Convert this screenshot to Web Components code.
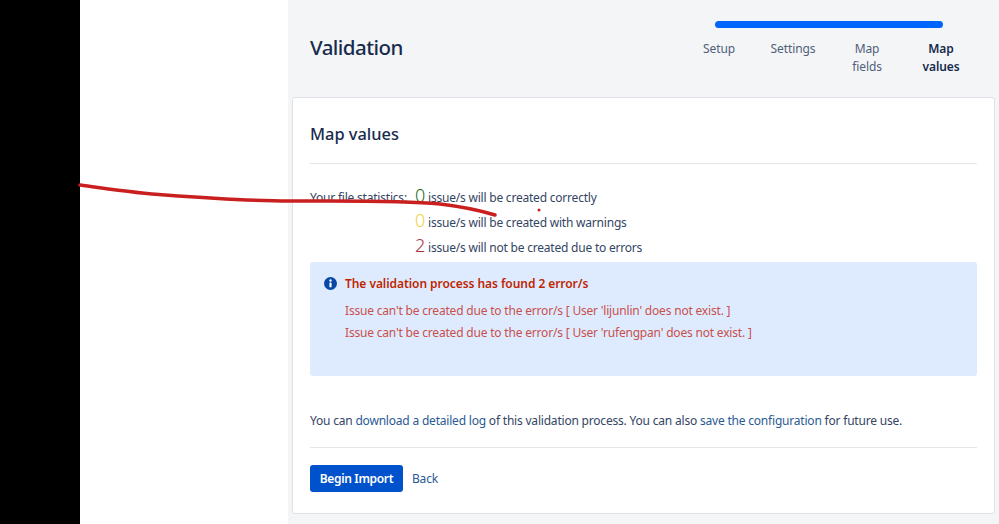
<!DOCTYPE html>
<html>
<head>
<meta charset="utf-8">
<title>Validation</title>
<style>
  html, body { margin: 0; height: 524px; overflow: hidden; background: #fff; }
  body { font-family: "Noto Sans", "Open Sans", sans-serif; color: #172b4d; }
</style>
</head>
<body>
<import-page>
  <wizard-steps slot="steps">
    <step-label>Setup</step-label>
    <step-label>Settings</step-label>
    <step-label>Map<br>fields</step-label>
    <step-label current>Map<br>values</step-label>
  </wizard-steps>
  <file-stats slot="stats"></file-stats>
  <info-panel slot="panel" heading="The validation process has found 2 error/s">
    <div>Issue can't be created due to the error/s [ User 'lijunlin' does not exist. ]</div>
    <div>Issue can't be created due to the error/s [ User 'rufengpan' does not exist. ]</div>
  </info-panel>
</import-page>

<script>
class ImportPage extends HTMLElement {
    constructor(){
        super();
        this.attachShadow({mode: 'open'}).innerHTML = `
        <style>
            :host{ display: flex; width: 999px; height: 524px; position: relative; }
            .black{ flex: 0 0 80px; background: #000; }
            .blank{ flex: 0 0 208px; background: #fff; }
            .main{ flex: 1 1 auto; background: #f4f5f7; padding: 0 4px; display: flex; flex-direction: column; }
            .top{ height: 97px; display: flex; justify-content: space-between; box-sizing: border-box; padding-left: 18px; }
            h1{ margin: 33px 0 0; font-size: 20.5px; letter-spacing: -0.55px; line-height: 28px; font-weight: 500; color: #172b4d; }
            .card{ height: 417px; box-sizing: border-box; background: #fff; border: 1px solid #dfe1e6; border-radius: 3px; padding: 24px 17px 0; }
            h2{ margin: 0; font-size: 16.4px; line-height: 24px; font-weight: 500; color: #172b4d; }
            hr{ border: none; border-top: 1px solid #e4e6ea; margin: 0; }
            .head{ padding-bottom: 17px; }
            p{ margin: 0; font-size: 12px; letter-spacing: -0.2px; line-height: 18px; color: #344563; }
            a{ color: #2a5a94; text-decoration: none; }
            .log{ margin-top: 36px; padding-bottom: 17px; }
            .actions{ display: flex; align-items: center; gap: 9px; padding-top: 17px; }
            button{ font: 600 12px/26px "Noto Sans", sans-serif; letter-spacing: -0.35px; color: #fff; background: #0052cc; border: none; border-radius: 3px; height: 27px; width: 93px; padding: 0; }
            .scribble{ position: absolute; left: 0; top: 0; pointer-events: none; }
        </style>
        <div class="black"></div>
        <div class="blank"></div>
        <div class="main">
            <div class="top">
                <h1>Validation</h1>
                <slot name="steps"></slot>
            </div>
            <div class="card">
                <div class="head"><h2>Map values</h2></div>
                <hr>
                <slot name="stats"></slot>
                <slot name="panel"></slot>
                <p class="log">You can <a href="#">download a detailed log</a> of this validation process. You can also <a href="#">save the configuration</a> for future use.</p>
                <hr>
                <div class="actions">
                    <button>Begin Import</button>
                    <a href="#" style="font-size:12px;letter-spacing:-0.2px">Back</a>
                </div>
            </div>
        </div>
        <svg class="scribble" width="999" height="524" fill="none">
            <path d="M80 185C110 189 135 193 165 195C205 198 245 201 290 201C340 201 400 200 440 204C465 207 482 211 495 215" stroke="#c9201f" stroke-width="3.5" stroke-linecap="round"/>
            <circle cx="539" cy="210" r="1.5" fill="#c9201f"/>
        </svg>`;
    }
}

class WizardSteps extends HTMLElement {
    constructor(){
        super();
        this.attachShadow({mode: 'open'}).innerHTML = `
        <style>
            :host{ display: block; width: 296px; margin-right: 17px; }
            .track{ height: 7px; margin: 21px 35px 0 33px; background: #0065ff; border-radius: 4px; }
            .labels{ display: flex; margin-top: 12px; }
        </style>
        <div class="track"></div>
        <div class="labels"><slot></slot></div>`;
    }
}

class StepLabel extends HTMLElement {
    constructor(){
        super();
        this.attachShadow({mode: 'open'}).innerHTML = `
        <style>
            :host{ display: block; flex: 1 1 0; text-align: center; font-size: 12px; letter-spacing: -0.1px; line-height: 18px; color: #505f79; }
            :host([current]){ color: #172b4d; font-weight: 600; }
        </style>
        <slot></slot>`;
    }
}

class FileStats extends HTMLElement {
    constructor(){
        super();
        this.attachShadow({mode: 'open'}).innerHTML = `
        <style>
            :host{ display: grid; grid-template-columns: 105px 1fr; margin-top: 21px; font-size: 12px; letter-spacing: -0.21px; color: #344563; }
            .rows{ display: flex; flex-direction: column; }
            .row, .label{ height: 25px; line-height: 25px; }
            .rows b{ display: inline-block; font-weight: 300; font-size: 18px; letter-spacing: 0; width: 13px; line-height: 20px; }
            .ok{ color: #1b6e20; }
            .warn{ color: #efd33c; }
            .bad{ color: #a8353f; }
        </style>
        <div class="label">Your file statistics:</div>
        <div class="rows">
            <div class="row"><b class="ok">0</b>issue/s will be created correctly</div>
            <div class="row"><b class="warn">0</b>issue/s will be created with warnings</div>
            <div class="row"><b class="bad">2</b>issue/s will not be created due to errors</div>
        </div>`;
    }
}

class InfoPanel extends HTMLElement {
    constructor(){
        super();
        this.attachShadow({mode: 'open'}).innerHTML = `
        <style>
            :host{ display: flex; gap: 8px; height: 114px; box-sizing: border-box; margin-top: 2px; padding: 13px 14px; background: #deebff; border-radius: 3px; font-size: 12px; letter-spacing: -0.19px; color: #c9504a; }
            svg{ flex: none; margin-top: 2px; }
            .title{ font-weight: 600; letter-spacing: -0.06px; color: #bf2600; line-height: 18px; margin-bottom: 7px; }
            .body{ line-height: 22px; }
        </style>
        <svg width="13" height="13" viewBox="0 0 24 24">
            <circle cx="12" cy="12" r="12" fill="#0747a6"/>
            <rect x="10" y="10" width="4" height="9" rx="1" fill="#fff"/>
            <circle cx="12" cy="6.5" r="2.2" fill="#fff"/>
        </svg>
        <div>
            <div class="title"></div>
            <div class="body"><slot></slot></div>
        </div>`;
    }
    connectedCallback(){
        this.shadowRoot.querySelector('.title').textContent = this.getAttribute('heading');
    }
}

customElements.define('import-page', ImportPage);
customElements.define('wizard-steps', WizardSteps);
customElements.define('step-label', StepLabel);
customElements.define('file-stats', FileStats);
customElements.define('info-panel', InfoPanel);
</script>
</body>
</html>
